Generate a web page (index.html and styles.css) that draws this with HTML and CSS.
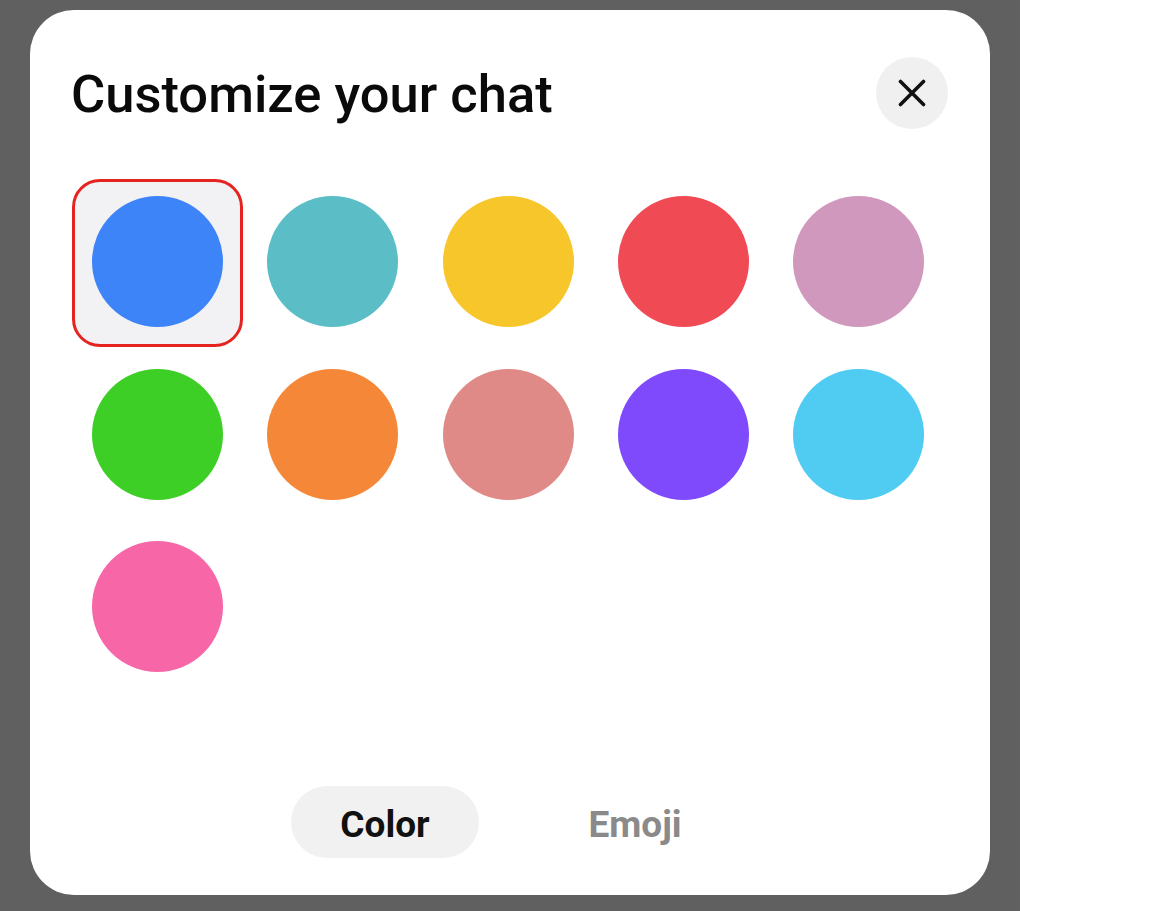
FILE: index.html
```html
<!DOCTYPE html>
<html lang="en">
<head>
<meta charset="utf-8">
<title>Customize your chat</title>
<link rel="stylesheet" href="styles.css">
</head>
<body>
<div class="backdrop">
  <div class="modal">
    <div class="header">
      <h1 class="title">Customize your chat</h1>
      <button class="close" aria-label="Close">
        <svg width="28" height="28" viewBox="0 0 28 28"><path d="M2.5 2.5 L25.5 25.5 M25.5 2.5 L2.5 25.5" stroke="#111" stroke-width="3.6" stroke-linecap="round"/></svg>
      </button>
    </div>
    <div class="grid">
      <div class="cell selected"><span class="dot c-blue"></span></div>
      <div class="cell"><span class="dot c-teal"></span></div>
      <div class="cell"><span class="dot c-yellow"></span></div>
      <div class="cell"><span class="dot c-red"></span></div>
      <div class="cell"><span class="dot c-mauve"></span></div>
      <div class="cell"><span class="dot c-green"></span></div>
      <div class="cell"><span class="dot c-orange"></span></div>
      <div class="cell"><span class="dot c-salmon"></span></div>
      <div class="cell"><span class="dot c-purple"></span></div>
      <div class="cell"><span class="dot c-sky"></span></div>
      <div class="cell"><span class="dot c-pink"></span></div>
    </div>
    <div class="spacer"></div>
    <div class="tabs">
      <div class="tab active">Color</div>
      <div class="tab">Emoji</div>
    </div>
  </div>
</div>
</body>
</html>
```

FILE: styles.css
```css
html, body {
  margin: 0;
  padding: 0;
  background: #ffffff;
  font-family: Roboto, "Noto Sans", "Liberation Sans", sans-serif;
}

.backdrop {
  width: 1020px;
  height: 911px;
  box-sizing: border-box;
  background: #606060;
  padding: 10px 30px 16px 30px;
  display: flex;
}

.modal {
  flex: 1;
  background: #ffffff;
  border-radius: 44px;
  display: flex;
  flex-direction: column;
  padding: 47px 42px 37px 42px;
  box-sizing: border-box;
}

.header {
  display: flex;
  align-items: center;
  justify-content: space-between;
  height: 72px;
}

.title {
  margin: 2px 0 0 -1px;
  font-size: 52.5px;
  font-weight: 500;
  color: #0a0a0a;
  letter-spacing: 0;
}

.close {
  width: 72px;
  height: 72px;
  border-radius: 50%;
  border: none;
  background: #f0f0f0;
  display: flex;
  align-items: center;
  justify-content: center;
  padding: 0;
}

.grid {
  margin-top: 50px;
  display: grid;
  grid-template-columns: repeat(5, 171px);
  grid-auto-rows: 168px;
  column-gap: 4.3px;
  row-gap: 4.5px;
}

.cell {
  display: flex;
  align-items: center;
  justify-content: center;
  border-radius: 28px;
  box-sizing: border-box;
  padding-bottom: 3px;
}

.cell.selected {
  background: #f2f2f4;
  border: 3px solid #e52421;
}

.dot {
  width: 131px;
  height: 131px;
  border-radius: 50%;
  display: block;
}

.c-blue { background: #3d84f8; }
.c-teal { background: #5bbec6; }
.c-yellow { background: #f7c62a; }
.c-red { background: #f04a55; }
.c-mauve { background: #d098bd; }
.c-green { background: #3ecf26; }
.c-orange { background: #f58838; }
.c-salmon { background: #df8a87; }
.c-purple { background: #7e4afc; }
.c-sky { background: #50ccf2; }
.c-pink { background: #f767a8; }

.spacer { flex: 1; }

.tabs {
  display: flex;
  justify-content: center;
  gap: 62px;
}

.tab {
  width: 188px;
  height: 72px;
  border-radius: 36px;
  display: flex;
  align-items: center;
  justify-content: center;
  box-sizing: border-box;
  padding-top: 4px;
  font-size: 37px;
  font-weight: 700;
  color: #8a8a8a;
}

.tab.active {
  background: #f1f1f1;
  color: #111111;
}
```
